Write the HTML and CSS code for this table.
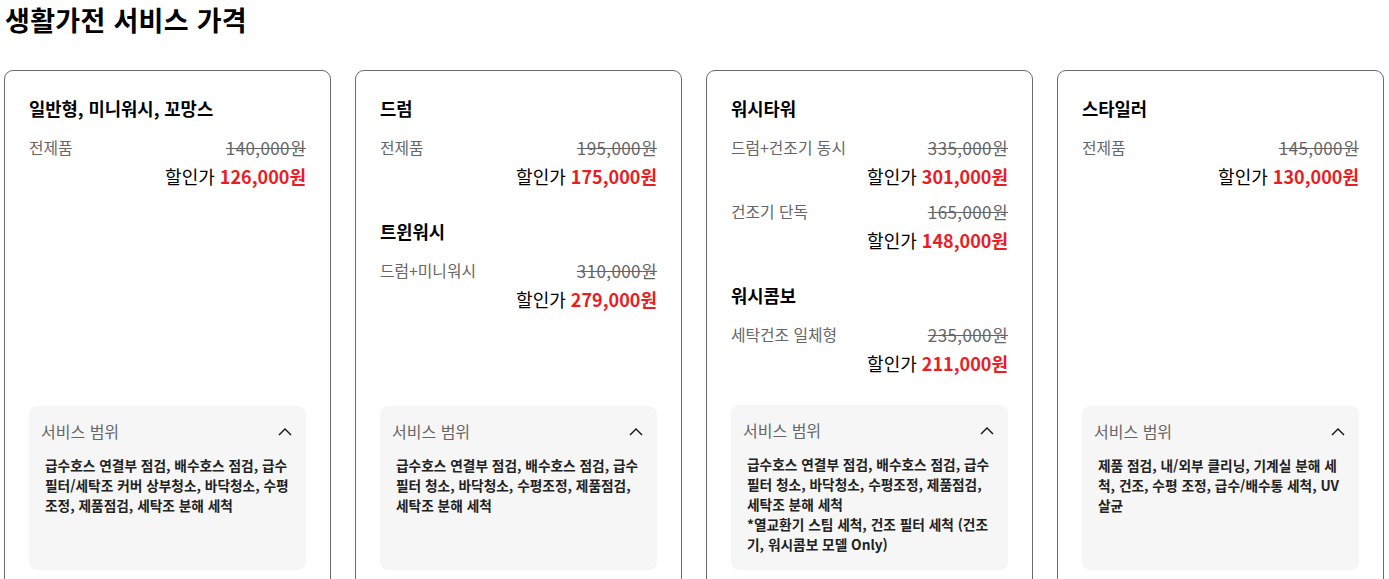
FILE: index.html
```html
<!DOCTYPE html>
<html lang="ko">
<head>
<meta charset="utf-8">
<title>생활가전 서비스 가격</title>
<link rel="stylesheet" href="styles.css">
</head>
<body>
<main class="page">
  <h1 class="page-title">생활가전 서비스 가격</h1>
  <div class="cards">
    <section class="card">
      <div class="groups">
        <div class="group">
          <h2 class="group-title">일반형, 미니워시, 꼬망스</h2>
          <div class="item">
            <div class="row"><span class="label">전제품</span><s class="orig">140,000원</s></div>
            <div class="sale">할인가 <strong>126,000원</strong></div>
          </div>
        </div>
      </div>
      <div class="scope">
        <div class="scope-head"><span>서비스 범위</span>
          <svg class="chev" width="14" height="9" viewBox="0 0 14 9"><path d="M1 8 L7 2 L13 8" fill="none" stroke="#111" stroke-width="1.4"/></svg>
        </div>
        <p class="scope-body">급수호스 연결부 점검, 배수호스 점검, 급수 필터/세탁조 커버 상부청소, 바닥청소, 수평조정, 제품점검, 세탁조 분해 세척</p>
      </div>
    </section>

    <section class="card">
      <div class="groups">
        <div class="group">
          <h2 class="group-title">드럼</h2>
          <div class="item">
            <div class="row"><span class="label">전제품</span><s class="orig">195,000원</s></div>
            <div class="sale">할인가 <strong>175,000원</strong></div>
          </div>
        </div>
        <div class="group">
          <h2 class="group-title">트윈워시</h2>
          <div class="item">
            <div class="row"><span class="label">드럼+미니워시</span><s class="orig">310,000원</s></div>
            <div class="sale">할인가 <strong>279,000원</strong></div>
          </div>
        </div>
      </div>
      <div class="scope">
        <div class="scope-head"><span>서비스 범위</span>
          <svg class="chev" width="14" height="9" viewBox="0 0 14 9"><path d="M1 8 L7 2 L13 8" fill="none" stroke="#111" stroke-width="1.4"/></svg>
        </div>
        <p class="scope-body">급수호스 연결부 점검, 배수호스 점검, 급수 필터 청소, 바닥청소, 수평조정, 제품점검, 세탁조 분해 세척</p>
      </div>
    </section>

    <section class="card">
      <div class="groups">
        <div class="group">
          <h2 class="group-title">워시타워</h2>
          <div class="item">
            <div class="row"><span class="label">드럼+건조기 동시</span><s class="orig">335,000원</s></div>
            <div class="sale">할인가 <strong>301,000원</strong></div>
          </div>
          <div class="item">
            <div class="row"><span class="label">건조기 단독</span><s class="orig">165,000원</s></div>
            <div class="sale">할인가 <strong>148,000원</strong></div>
          </div>
        </div>
        <div class="group">
          <h2 class="group-title">워시콤보</h2>
          <div class="item">
            <div class="row"><span class="label">세탁건조 일체형</span><s class="orig">235,000원</s></div>
            <div class="sale">할인가 <strong>211,000원</strong></div>
          </div>
        </div>
      </div>
      <div class="scope">
        <div class="scope-head"><span>서비스 범위</span>
          <svg class="chev" width="14" height="9" viewBox="0 0 14 9"><path d="M1 8 L7 2 L13 8" fill="none" stroke="#111" stroke-width="1.4"/></svg>
        </div>
        <p class="scope-body">급수호스 연결부 점검, 배수호스 점검, 급수 필터 청소, 바닥청소, 수평조정, 제품점검, 세탁조 분해 세척<br>*열교환기 스팀 세척, 건조 필터 세척 (건조기, 워시콤보 모델 Only)</p>
      </div>
    </section>

    <section class="card">
      <div class="groups">
        <div class="group">
          <h2 class="group-title">스타일러</h2>
          <div class="item">
            <div class="row"><span class="label">전제품</span><s class="orig">145,000원</s></div>
            <div class="sale">할인가 <strong>130,000원</strong></div>
          </div>
        </div>
      </div>
      <div class="scope">
        <div class="scope-head"><span>서비스 범위</span>
          <svg class="chev" width="14" height="9" viewBox="0 0 14 9"><path d="M1 8 L7 2 L13 8" fill="none" stroke="#111" stroke-width="1.4"/></svg>
        </div>
        <p class="scope-body">제품 점검, 내/외부 클리닝, 기계실 분해 세척, 건조, 수평 조정, 급수/배수통 세척, UV 살균</p>
      </div>
    </section>
  </div>
</main>
</body>
</html>
```

FILE: styles.css
```css
* { box-sizing: border-box; }
html, body { margin: 0; padding: 0; background: #fff; }
body {
  font-family: "Noto Sans CJK KR", "Noto Sans", sans-serif;
  color: #111;
}
.page { padding: 0 5px 0 4px; }
.page-title {
  margin: 0 0 0 1px;
  font-size: 27px;
  line-height: 40px;
  font-weight: 700;
  letter-spacing: 0.3px;
  color: #000;
}
.cards {
  margin-top: 30px;
  display: flex;
  gap: 24px;
  align-items: stretch;
}
.card {
  flex: 1 1 0;
  min-width: 0;
  border: 1px solid #6b6b6b;
  border-radius: 9px;
  padding: 24px 24px 24px;
  display: flex;
  flex-direction: column;
}
.groups {
  flex: 1;
  display: flex;
  flex-direction: column;
  gap: 30px;
  padding-bottom: 30px;
}
.group { display: flex; flex-direction: column; gap: 13px; }
.group-title {
  margin: 0 0 3px;
  font-size: 17.7px;
  line-height: 26px;
  height: 26px;
  font-weight: 700;
  color: #000;
}
.item { display: flex; flex-direction: column; gap: 5px; }
.row {
  display: flex;
  justify-content: space-between;
  align-items: center;
  height: 22px;
  font-size: 15.8px;
  line-height: 22px;
  color: #666;
}
.orig {
  font-size: 17px;
  line-height: 22px;
  letter-spacing: 0.4px;
  color: #666;
  text-decoration-thickness: 1px;
}
.sale {
  text-align: right;
  font-size: 18px;
  line-height: 24px;
  height: 24px;
  color: #000;
}
.sale strong { color: #ea1c24; font-weight: 700; }
.scope {
  background: #f6f6f6;
  border-radius: 8px;
  padding: 12px 12px 16px;
  min-height: 164px;
}
.scope-head {
  display: flex;
  justify-content: space-between;
  align-items: center;
  height: 26px;
  font-size: 16px;
  line-height: 26px;
  color: #666;
  padding-right: 2px;
}
.chev { display: block; }
.scope-body {
  margin: 11px 0 0;
  padding: 0 3px 0 4px;
  font-size: 13.7px;
  line-height: 20px;
  font-weight: 700;
  color: #222;
}
```
